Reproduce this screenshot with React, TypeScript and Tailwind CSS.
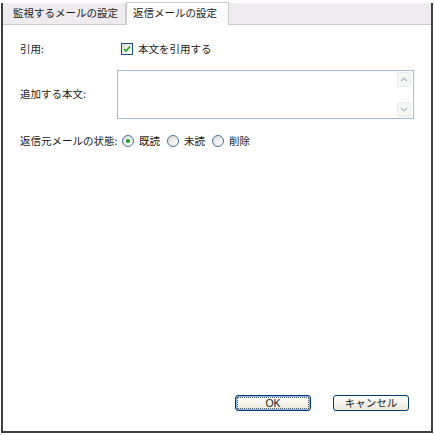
import React from "react";

const font = { fontFamily: '"Noto Sans CJK JP", "Noto Sans", sans-serif' };

function Checkbox() {
  return (
    <div className="w-[12px] h-[12px] border border-[#1c5180] bg-gradient-to-br from-[#dcdcd7] to-white flex items-center justify-center">
      <svg width="8" height="8" viewBox="0 0 8 8">
        <path d="M1 4 L3 6 L7 1.5" stroke="#21a121" strokeWidth="1.6" fill="none" />
      </svg>
    </div>
  );
}

function Radio({ on }: { on?: boolean }) {
  return (
    <div className="w-[12px] h-[12px] rounded-full border border-[#4a6e94] bg-gradient-to-br from-[#dcdcd7] to-white flex items-center justify-center">
      {on && <div className="w-[4px] h-[4px] rounded-full bg-[#21a121]" />}
    </div>
  );
}

function Arrow({ up }: { up?: boolean }) {
  return (
    <div className="w-[14px] h-[15px] rounded-[2px] border border-[#e8ebf1] bg-[#f6f6f3] flex items-center justify-center">
      <svg width="8" height="5" viewBox="0 0 8 5">
        <path d={up ? "M1 4 L4 1 L7 4" : "M1 1 L4 4 L7 1"} stroke="#b4bac6" strokeWidth="1.2" fill="none" />
      </svg>
    </div>
  );
}

export default function App() {
  return (
    <div className="w-[435px] h-[435px] bg-white pt-[3px] pl-[1px]" style={font}>
      <div className="w-[432px] h-[430px] border-l-2 border-r-2 border-b-2 border-[#404040] flex flex-col text-[10.5px] text-[#1a1a1a] leading-none">
        <div className="h-[22px] bg-[#eeebee] border-b border-[#c9c9c9] flex items-end shrink-0">
          <div className="h-[21px] w-[123px] border-r border-[#d4d0d4] flex items-center pl-[10px]">
            監視するメールの設定
          </div>
          <div className="h-[23px] -mb-[1px] w-[103px] bg-white border-l border-r border-t border-[#c9c9c9] flex items-center pl-[6px] pb-[2px]">
            返信メールの設定
          </div>
        </div>
        <div className="flex-1 flex flex-col pl-[17px]">
          <div className="flex items-center mt-[18px] h-[12px]">
            <div className="w-[101px]">引用:</div>
            <Checkbox />
            <div className="ml-[5px]">本文を引用する</div>
          </div>
          <div className="flex items-center mt-[15px]">
            <div className="w-[97px]">追加する本文:</div>
            <div className="w-[297px] h-[49px] border border-[#a5bcd8] flex justify-end">
              <div className="w-[16px] flex flex-col justify-between py-[1px]">
                <Arrow up />
                <Arrow />
              </div>
            </div>
          </div>
          <div className="flex items-center mt-[16px] h-[12px]">
            <div className="w-[102px]">返信元メールの状態:</div>
            <Radio on />
            <div className="ml-[5px]">既読</div>
            <div className="ml-[7px]"><Radio /></div>
            <div className="ml-[5px]">未読</div>
            <div className="ml-[7px]"><Radio /></div>
            <div className="ml-[5px]">削除</div>
          </div>
          <div className="flex-1" />
          <div className="flex justify-end gap-[22px] pr-[22px] mb-[20px]">
            <div className="w-[76px] h-[16px] rounded-[3px] border border-[#003c74] bg-gradient-to-b from-white to-[#ece9d8] p-[1px] shadow-[inset_0_0_0_1px_#8fb3e8]">
              <div className="w-full h-full border border-dotted border-[#555] flex items-center justify-center text-[10.5px]" style={{ fontFamily: '"Liberation Sans", sans-serif' }}>
                OK
              </div>
            </div>
            <div className="w-[76px] h-[16px] rounded-[3px] border border-[#003c74] bg-gradient-to-b from-white to-[#ece9d8] flex items-center justify-center">
              キャンセル
            </div>
          </div>
        </div>
      </div>
    </div>
  );
}
